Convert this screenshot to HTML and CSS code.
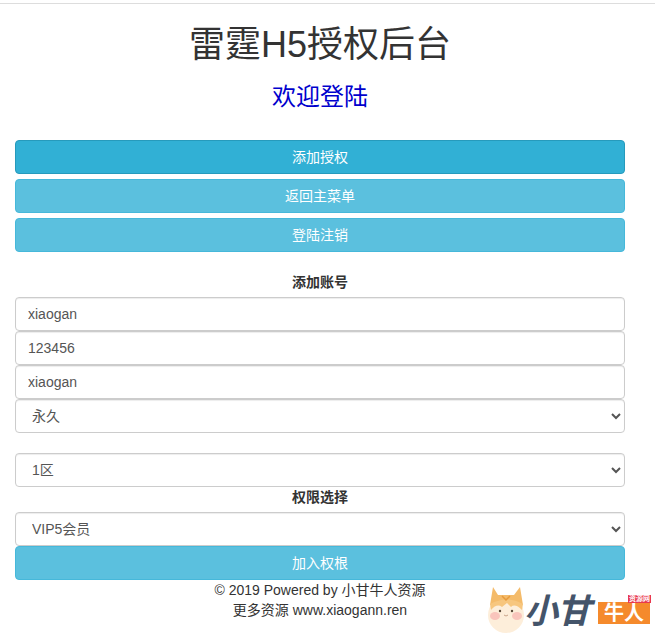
FILE: index.html
```html
<!DOCTYPE html>
<html lang="zh-CN">
<head>
  <meta charset="UTF-8">
  <meta name="viewport" content="width=device-width, initial-scale=1.0">
  <title>雷霆H5授权后台</title>
  <link rel="stylesheet" href="styles.css">
</head>
<body>
  <div class="top-line"></div>
  <div class="container">
    <h1>雷霆H5授权后台</h1>
    <h3>欢迎登陆</h3>

    <div class="menu">
      <a class="btn btn-active" href="#">添加授权</a>
      <a class="btn" href="#">返回主菜单</a>
      <a class="btn" href="#">登陆注销</a>
    </div>

    <form class="account-form">
      <label class="form-title">添加账号</label>
      <input class="form-control" type="text" value="xiaogan">
      <input class="form-control" type="text" value="123456">
      <input class="form-control" type="text" value="xiaogan">
      <select class="form-control">
        <option>永久</option>
      </select>
      <select class="form-control area-select">
        <option>1区</option>
      </select>
      <label class="form-title">权限选择</label>
      <select class="form-control">
        <option>VIP5会员</option>
      </select>
      <button class="btn" type="button">加入权根</button>
    </form>

    <footer class="footer">
      <p>© 2019 Powered by 小甘牛人资源</p>
      <p>更多资源 www.xiaogann.ren</p>
    </footer>
  </div>

  <!-- 水印 -->
  <div class="watermark">
    <svg class="mascot" width="40" height="47" viewBox="0 0 40 47">
      <circle cx="19" cy="29" r="18" fill="#fdeeda"/>
      <path d="M6 1 L11 9 L27 9 L33 1 L36 19 Q20 12 3 19 Z" fill="#f4bb6a"/>
      <path d="M3 18 Q20 9 36 18 L35 24 Q28 17 24 21 L20 17 L15 21 Q10 17 4 24 Z" fill="#f7c67e"/>
      <path d="M15 10 L19 14 L23 10" fill="none" stroke="#e79a3c" stroke-width="1.5"/>
      <ellipse cx="8" cy="30" rx="5" ry="4" fill="#f9c5bc"/>
      <ellipse cx="30" cy="30" rx="5" ry="4" fill="#f9c5bc"/>
      <circle cx="13" cy="25" r="1.2" fill="#5a4a3a"/>
      <circle cx="25" cy="25" r="1.2" fill="#5a4a3a"/>
      <path d="M17 29 Q19 31 21 29" fill="none" stroke="#c9a58a" stroke-width="1"/>
    </svg>
    <span class="wm-name">小甘</span>
    <span class="wm-tag">牛人<small class="wm-badge">资源网</small></span>
  </div>
</body>
</html>
```

FILE: styles.css
```css
* {
  box-sizing: border-box;
}
body {
  font-family: "Liberation Sans", "Noto Sans CJK SC", sans-serif;
  font-size: 14px;
  line-height: 20px;
  color: #333;
  background-color: #fff;
  margin: 0;
  min-height: 633px;
  position: relative;
  overflow: hidden;
}
.top-line {
  height: 1px;
  margin-top: 3px;
  background-color: #ddd;
}
.container {
  width: 640px;
  padding: 0 15px;
}
h1 {
  font-size: 36px;
  font-weight: 400;
  line-height: 40px;
  text-align: center;
  margin: 21px 0 9px;
}
h3 {
  font-size: 24px;
  font-weight: 400;
  line-height: 26px;
  text-align: center;
  color: #0000cd;
  margin: 19px 0 10px;
}
.menu {
  display: flex;
  flex-direction: column;
  gap: 5px;
  margin-top: 30px;
}
.btn {
  display: block;
  width: 100%;
  height: 34px;
  padding: 6px 12px;
  font-family: inherit;
  font-size: 14px;
  line-height: 20px;
  text-align: center;
  text-decoration: none;
  color: #fff;
  background-color: #5bc0de;
  border: 1px solid #46b8da;
  border-radius: 4px;
}
.btn-active {
  background-color: #31b0d5;
  border-color: #269abc;
}
.account-form {
  display: flex;
  flex-direction: column;
  margin-top: 20px;
}
.form-title {
  font-weight: bold;
  text-align: center;
  margin-bottom: 5px;
}
.form-control {
  display: block;
  width: 100%;
  height: 34px;
  padding: 6px 12px;
  font-family: inherit;
  font-size: 14px;
  line-height: 20px;
  color: #555;
  background-color: #fff;
  border: 1px solid #ccc;
  border-radius: 4px;
  box-shadow: inset 0 1px 1px rgba(0, 0, 0, 0.075);
}
.area-select {
  margin-top: 20px;
}
.footer {
  text-align: center;
}
.footer p {
  margin: 0;
}
.watermark {
  position: absolute;
  left: 487px;
  top: 586px;
  width: 168px;
  height: 47px;
  display: flex;
  align-items: center;
}
.mascot {
  flex: none;
}
.wm-name {
  font-size: 34px;
  line-height: 40px;
  font-weight: bold;
  font-style: italic;
  color: #44546a;
  letter-spacing: -1px;
  white-space: nowrap;
  margin: 2px 0 0 -3px;
}
.wm-tag {
  position: relative;
  margin: 6px 0 0 8px;
  width: 52px;
  flex: none;
  font-size: 20px;
  line-height: 22px;
  font-weight: bold;
  text-align: center;
  color: #fff;
  background-color: #f58a2c;
  white-space: nowrap;
}
.wm-badge {
  position: absolute;
  right: -1px;
  top: -7px;
  font-size: 7px;
  line-height: 8px;
  padding: 0 1px;
  background-color: #e8384f;
}
```
